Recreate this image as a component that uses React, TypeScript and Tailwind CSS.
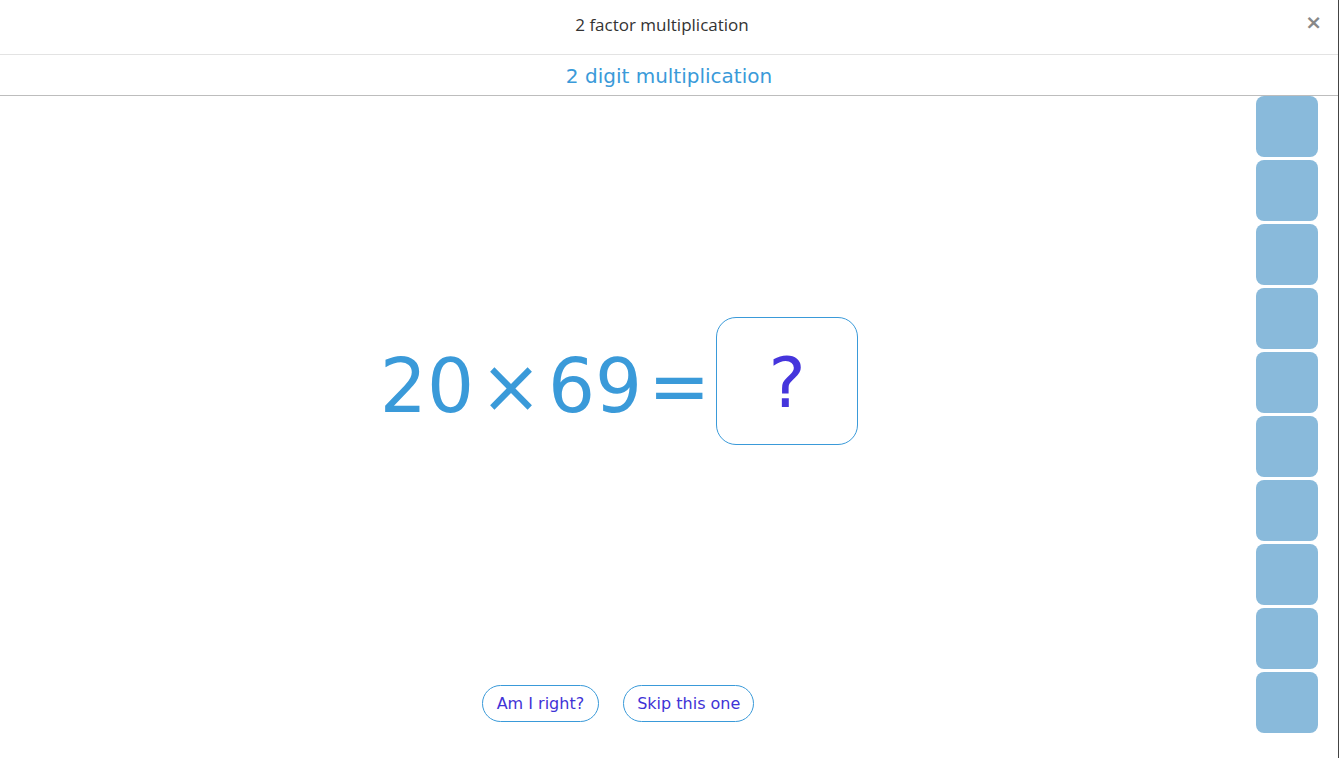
import React from "react";

const tiles = Array.from({ length: 10 }, (_, i) => i);

export default function App() {
  return (
    <div className="w-[1339px] h-[758px] bg-white border-r border-[#444] flex flex-col overflow-hidden">
      {/* dialog header */}
      <div className="relative h-[55px] shrink-0 border-b border-[#e3e3e3] flex items-center justify-center pr-[14px]">
        <div className="text-[17px] text-[#333] font-['Open_Sans',sans-serif] -mt-[4px]">2 factor multiplication</div>
        <button className="absolute right-[16px] top-[12px] text-[20px] leading-none font-bold text-[#888] font-['DejaVu_Sans',sans-serif]">
          ×
        </button>
      </div>

      {/* level name */}
      <div className="h-[41px] shrink-0 border-b border-[#bdbdbd] flex items-center justify-center">
        <div className="text-[20px] text-[#3a9ad9] font-['DejaVu_Sans',sans-serif] mt-[2px]">2 digit multiplication</div>
      </div>

      <div className="flex flex-1 min-h-0">
        {/* question area */}
        <div className="flex-1 flex flex-col items-center pr-[16px] font-['DejaVu_Sans',sans-serif]">
          <div className="mt-[221px] flex items-center -translate-x-[1px]">
            <div className="text-[74px] leading-none text-[#3a9ad9] pt-[10px]">20</div>
            <div className="text-[74px] leading-none text-[#3a9ad9] ml-[6px] pt-[10px]">×</div>
            <div className="text-[74px] leading-none text-[#3a9ad9] ml-[6px] pt-[10px]">69</div>
            <div className="text-[74px] leading-none text-[#3a9ad9] ml-[6px] pt-[10px]">=</div>
            <div className="ml-[6px] w-[142px] h-[128px] rounded-[20px] border border-[#3a9ad9] flex items-center justify-center">
              <span className="text-[70px] leading-none text-[#4535dc] pt-[4px]">?</span>
            </div>
          </div>
          <div className="mt-[240px] flex gap-[24px] -translate-x-[2px]">
            <button className="h-[37px] px-[14px] rounded-full border border-[#3a9ad9] text-[16px] text-[#3f33d6] font-['DejaVu_Sans',sans-serif]">Am I right?</button>
            <button className="h-[37px] px-[13px] rounded-full border border-[#3a9ad9] text-[16px] text-[#3f33d6] font-['DejaVu_Sans',sans-serif]">Skip this one</button>
          </div>
        </div>

        {/* progress tiles */}
        <div className="w-[62px] mr-[20px] flex flex-col gap-[3px]">
          {tiles.map((t) => (
            <div key={t} className="h-[61px] rounded-[8px] bg-[#89badb]" />
          ))}
        </div>
      </div>
    </div>
  );
}
